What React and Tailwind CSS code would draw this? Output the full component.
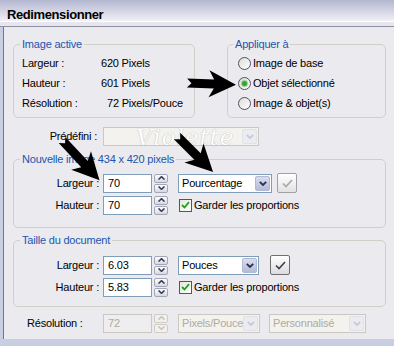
import React from "react";

function Spin({ disabled }) {
  const box = disabled
    ? "flex-1 flex items-center justify-center border border-[#cfcdc4] rounded-[2px] bg-[#f1f0ec]"
    : "flex-1 flex items-center justify-center border border-[#a2a6b8] rounded-[2px] bg-gradient-to-b from-white to-[#d6d8e4]";
  const c = disabled ? "#c6c4bc" : "#3a3e52";
  return (
    <div className="flex flex-col w-[14px] h-[19px] gap-[1px] ml-[2px]">
      <div className={box}>
        <svg width="7" height="4" viewBox="0 0 7 4">
          <path d="M0.5 3.6 L3.5 0.6 L6.5 3.6" stroke={c} strokeWidth="1.5" fill="none" />
        </svg>
      </div>
      <div className={box}>
        <svg width="7" height="4" viewBox="0 0 7 4">
          <path d="M0.5 0.4 L3.5 3.4 L6.5 0.4" stroke={c} strokeWidth="1.5" fill="none" />
        </svg>
      </div>
    </div>
  );
}

function DropBtn({ disabled }) {
  return (
    <div
      className={
        disabled
          ? "w-[15px] h-[15px] mr-[1px] flex items-center justify-center rounded-[2px] bg-[#ebecf2] border border-[#e0e1ea]"
          : "w-[15px] h-[15px] mr-[1px] flex items-center justify-center rounded-[2px] bg-gradient-to-b from-[#d9ddee] to-[#b5bcd8] border border-[#b0b8d4]"
      }
    >
      <svg width="8" height="5" viewBox="0 0 8 5">
        <path
          d="M0.8 0.8 L4 4 L7.2 0.8"
          stroke={disabled ? "#c9cad3" : "#2c3046"}
          strokeWidth="1.8"
          fill="none"
        />
      </svg>
    </div>
  );
}

function Select({ text, w, disabled }) {
  return (
    <div
      className={
        (disabled
          ? "border-[#cbc9bf] bg-[#f3f2ee] text-[#aeab9f] "
          : "border-[#7f9db9] bg-white text-black ") +
        "flex items-center h-[19px] border " +
        w
      }
    >
      <div className="flex-1 min-w-0 overflow-hidden whitespace-nowrap pl-[3px]">{text}</div>
      <DropBtn disabled={disabled} />
    </div>
  );
}

function Input({ value, disabled }) {
  return (
    <div
      className={
        disabled
          ? "w-[49px] h-[19px] border border-[#cbc9bf] bg-[#eeedf0] text-[#aeab9f] flex items-center pl-[4px]"
          : "w-[49px] h-[19px] border border-[#7f9db9] bg-white flex items-center pl-[4px]"
      }
    >
      {value}
    </div>
  );
}

function CheckBtn({ dark }) {
  return (
    <div
      className={
        dark
          ? "w-[20px] h-[20px] border border-[#707070] rounded-[2px] bg-gradient-to-b from-white to-[#dcdce0] flex items-center justify-center"
          : "w-[20px] h-[20px] border border-[#a0a0a4] rounded-[2px] bg-gradient-to-b from-white to-[#e2e2e6] flex items-center justify-center"
      }
    >
      <svg width="11" height="9" viewBox="0 0 11 9">
        <path
          d="M1 4.5 L4 7.5 L10 1"
          stroke={dark ? "#404040" : "#a8a8a8"}
          strokeWidth="1.6"
          fill="none"
        />
      </svg>
    </div>
  );
}

function CheckBox() {
  return (
    <div className="w-[13px] h-[13px] border border-[#3f5a7e] bg-gradient-to-br from-[#e6e6e0] to-white flex items-center justify-center">
      <svg width="9" height="8" viewBox="0 0 9 8">
        <path d="M1 4 L3.5 6.5 L8 1.2" stroke="#21a121" strokeWidth="1.8" fill="none" />
      </svg>
    </div>
  );
}

function Radio({ checked }) {
  return (
    <div className="w-[13px] h-[13px] rounded-full border border-[#4c5268] bg-gradient-to-br from-[#dcdcd8] to-white flex items-center justify-center">
      {checked && (
        <div className="w-[5px] h-[5px] rounded-full bg-[#3aa03a] shadow-[0_0_1px_1px_#8fd38f]" />
      )}
    </div>
  );
}

function Legend({ children }) {
  return (
    <legend className="ml-[6px] px-[2px] leading-[13px] text-[#2056ae]">{children}</legend>
  );
}

function arrowPts(L) {
  return `0,-4.5 ${L - 22},-4.5 ${L - 27},-13.5 ${L},0 ${L - 27},13.5 ${L - 22},4.5 0,4.5 4.5,0`;
}

export default function App() {
  return (
    <div className="relative w-[394px] h-[346px] overflow-hidden bg-[#c8cfe2] font-['Liberation_Sans',Arial,sans-serif] text-[11px] tracking-[-0.2px] text-black leading-[13px]">
      {/* title bar */}
      <div className="h-[21px] bg-gradient-to-b from-[#b3b7d0] via-[#d2d4e3] to-[#f0f0f5] pl-[7px] pt-[8px]">
        <span className="font-bold text-[13px] tracking-[-0.4px] leading-[13px]">Redimensionner</span>
      </div>
      <div className="h-[1px] bg-white" />
      <div className="h-[4px] bg-[#e6e6ec]" />
      <div className="h-[1px] bg-[#8e8fa2]" />

      {/* body */}
      <div className="ml-[3px] h-[312px] border-l border-[#6f7490] bg-[#ebeaef] pt-[11px]">
        {/* row 1 */}
        <div className="flex ml-[9px]">
          <fieldset className="w-[182px] h-[80px] border border-[#d0d0c6] rounded-[5px]">
            <Legend>Image active</Legend>
            <div className="mt-[2px] pl-[8px]">
              <div className="flex items-center h-[20px]">
                <div className="w-[79px]">Largeur :</div>
                <div>620 Pixels</div>
              </div>
              <div className="flex items-center h-[20px]">
                <div className="w-[79px]">Hauteur :</div>
                <div>601 Pixels</div>
              </div>
              <div className="flex items-center h-[20px]">
                <div className="w-[79px]">Résolution :</div>
                <div className="pl-[6px]">72 Pixels/Pouce</div>
              </div>
            </div>
          </fieldset>
          <fieldset className="ml-[32px] w-[159px] h-[80px] border border-[#d0d0c6] rounded-[5px]">
            <legend className="ml-[5px] px-[2px] leading-[13px] text-[#2056ae]">Appliquer à</legend>
            <div className="mt-[2px] pl-[10px]">
              <div className="flex items-center h-[20px] gap-[2px]">
                <Radio />
                <span>Image de base</span>
              </div>
              <div className="flex items-center h-[20px] gap-[2px]">
                <Radio checked />
                <span>Objet sélectionné</span>
              </div>
              <div className="flex items-center h-[20px] gap-[2px]">
                <Radio />
                <span>Image &amp; objet(s)</span>
              </div>
            </div>
          </fieldset>
        </div>

        {/* prédéfini */}
        <div className="flex items-center h-[19px] mt-[9px]">
          <div className="w-[93px] text-right">Prédéfini :</div>
          <div className="ml-[6px]">
            <Select text="" w="w-[156px]" disabled />
          </div>
        </div>

        {/* nouvelle image */}
        <fieldset className="ml-[9px] mt-[7px] w-[373px] h-[75px] border border-[#d0d0c6] rounded-[5px]">
          <Legend>Nouvelle image 434 x 420 pixels</Legend>
          <div className="mt-[6px]">
            <div className="flex items-center h-[22px]">
              <div className="w-[85px] text-right">Largeur :</div>
              <div className="ml-[4px]">
                <Input value="70" />
              </div>
              <Spin />
              <div className="ml-[10px]">
                <Select text="Pourcentage" w="w-[94px]" />
              </div>
              <div className="ml-[5px]">
                <CheckBtn />
              </div>
            </div>
            <div className="flex items-center h-[22px]">
              <div className="w-[85px] text-right">Hauteur :</div>
              <div className="ml-[4px]">
                <Input value="70" />
              </div>
              <Spin />
              <div className="ml-[11px]">
                <CheckBox />
              </div>
              <span className="ml-[2px]">Garder les proportions</span>
            </div>
          </div>
        </fieldset>

        {/* taille du document */}
        <fieldset className="ml-[9px] mt-[6px] w-[373px] h-[73px] border border-[#d0d0c6] rounded-[5px]">
          <Legend>Taille du document</Legend>
          <div className="mt-[7px]">
            <div className="flex items-center h-[22px]">
              <div className="w-[85px] text-right">Largeur :</div>
              <div className="ml-[4px]">
                <Input value="6.03" />
              </div>
              <Spin />
              <div className="ml-[10px]">
                <Select text="Pouces" w="w-[81px]" />
              </div>
              <div className="ml-[11px]">
                <CheckBtn dark />
              </div>
            </div>
            <div className="flex items-center h-[22px]">
              <div className="w-[85px] text-right">Hauteur :</div>
              <div className="ml-[4px]">
                <Input value="5.83" />
              </div>
              <Spin />
              <div className="ml-[11px]">
                <CheckBox />
              </div>
              <span className="ml-[2px]">Garder les proportions</span>
            </div>
          </div>
        </fieldset>

        {/* résolution */}
        <div className="flex items-center h-[20px] mt-[6px] pl-[23px]">
          <div className="w-[76px]">Résolution :</div>
          <Input value="72" disabled />
          <Spin disabled />
          <div className="ml-[10px]">
            <Select text="Pixels/Pouce" w="w-[82px]" disabled />
          </div>
          <div className="ml-[9px]">
            <Select text="Personnalisé" w="w-[97px]" disabled />
          </div>
        </div>
      </div>

      {/* watermark */}
      <div className="absolute left-[136px] top-[124px] font-['DejaVu_Serif',serif] italic text-[23px] leading-[26px] text-white [text-shadow:0_0_1px_#9a9aa6] tracking-[1px]">
        Violette
      </div>

      {/* arrows */}
      <svg className="absolute left-0 top-0" width="394" height="346" viewBox="0 0 394 346">
        <polygon points={arrowPts(49)} transform="translate(187,83) rotate(2)" fill="#000" />
        <polygon points={arrowPts(55)} transform="translate(62,140) rotate(47)" fill="#000" />
        <polygon points={arrowPts(51)} transform="translate(177,136) rotate(45)" fill="#000" />
      </svg>
    </div>
  );
}
